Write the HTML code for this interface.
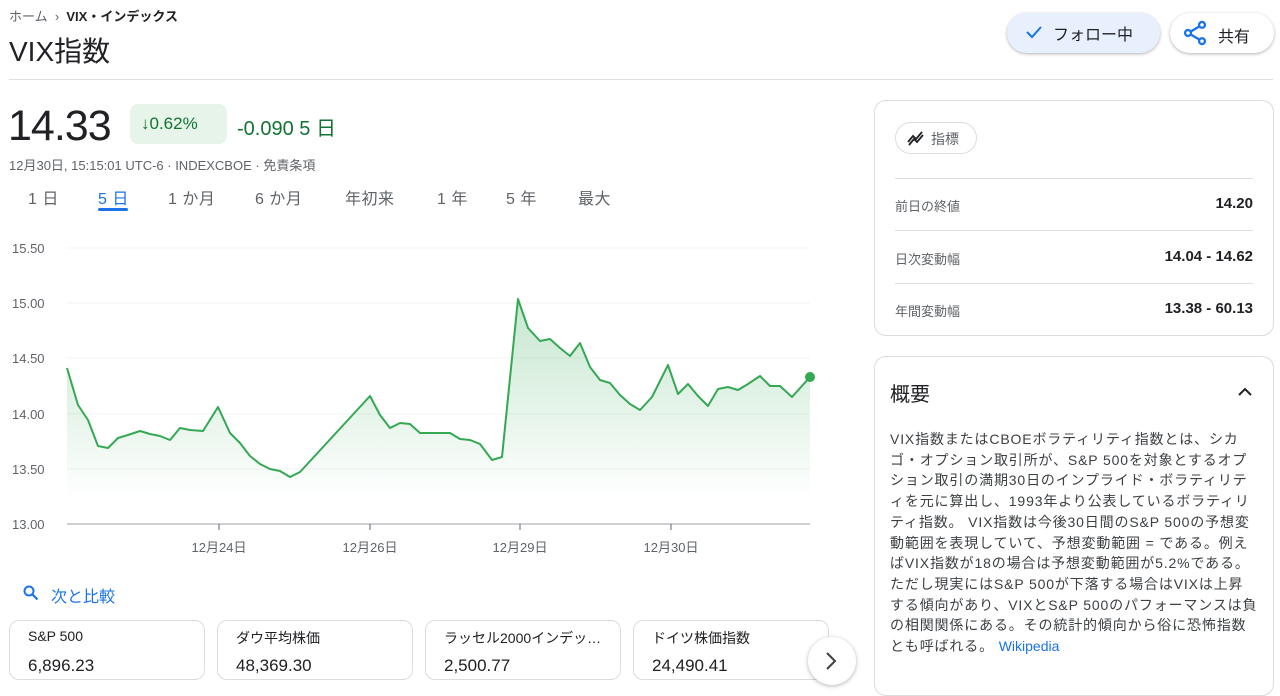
<!DOCTYPE html>
<html><head><meta charset="utf-8"><style>
*{margin:0;padding:0;box-sizing:border-box}
body{width:1280px;height:670px;overflow:hidden;background:#fff;font-family:"Liberation Sans","Noto Sans CJK JP",sans-serif;color:#202124;position:relative}
.a{position:absolute;white-space:nowrap}
.tab{position:absolute;top:185px;font-size:16px;color:#5f6368;letter-spacing:.5px}
.card{position:absolute;border:1px solid #dadce0;border-radius:12px}
.row{position:absolute;left:20px;right:20px;height:1px;background:#dadce0}
.lbl{position:absolute;left:20px;font-size:13px;color:#5f6368}
.val{position:absolute;right:20px;font-size:15px;color:#202124;font-weight:bold}
.cc{position:absolute;top:620px;width:196px;height:60px;border:1px solid #dadce0;border-radius:10px}
.cc .n{position:absolute;left:18px;top:7px;font-size:14px;color:#202124}
.cc .p{position:absolute;left:18px;top:35px;font-size:17px;color:#202124}
</style></head><body>
<div class="a" style="left:9px;top:6px;font-size:13px;color:#5f6368">ホーム&nbsp;&nbsp;›&nbsp;&nbsp;<span style="color:#202124;font-weight:bold">VIX・インデックス</span></div>
<div class="a" style="left:9px;top:30px;font-size:28px;color:#202124">VIX指数</div>
<div class="a" style="left:1007px;top:13px;width:153px;height:40px;border-radius:20px;background:#e8f0fe;box-shadow:0 1px 3px rgba(0,0,0,.3)">
<svg style="position:absolute;left:18px;top:11px" width="18" height="16" viewBox="0 0 18 16"><path d="M2 8l5 5 9-10" stroke="#1a73e8" stroke-width="2" fill="none"/></svg>
<span class="a" style="left:46px;top:8px;font-size:16px;color:#202124">フォロー中</span></div>
<div class="a" style="left:1170px;top:13px;width:104px;height:40px;border-radius:20px;background:#fff;box-shadow:0 1px 3px rgba(0,0,0,.3)">
<svg style="position:absolute;left:11px;top:6px" width="28" height="28" viewBox="0 0 24 24"><g stroke="#1a73e8" stroke-width="2" fill="none"><circle cx="18" cy="5" r="2.5"/><circle cx="6" cy="12" r="2.5"/><circle cx="18" cy="19" r="2.5"/><path d="M8.2 10.8l7.6-4.5M8.2 13.2l7.6 4.5"/></g></svg>
<span class="a" style="left:48px;top:10px;font-size:16px;color:#202124">共有</span></div>
<div class="a" style="left:9px;top:79px;width:1264px;height:1px;background:#e0e0e0"></div>

<div class="a" style="left:8px;top:102px;font-size:43px;color:#202124;letter-spacing:-1px">14.33</div>
<div class="a" style="left:130px;top:104px;width:97px;height:40px;border-radius:8px;background:#e6f4ea;color:#137333;font-size:17px;padding:10px 0 0 11px">↓0.62%</div>
<div class="a" style="left:237px;top:112px;font-size:20px;color:#137333">-0.090 5 日</div>
<div class="a" style="left:9px;top:155px;font-size:13px;color:#5f6368">12月30日, 15:15:01 UTC-6 · INDEXCBOE · 免責条項</div>
<div class="tab" style="left:28px">1 日</div>
<div class="tab" style="left:98px;color:#1a73e8">5 日</div>
<div class="a" style="left:98px;top:208px;width:30px;height:3px;background:#1a73e8;border-radius:2px"></div>
<div class="tab" style="left:168px">1 か月</div>
<div class="tab" style="left:255px">6 か月</div>
<div class="tab" style="left:345px">年初来</div>
<div class="tab" style="left:437px">1 年</div>
<div class="tab" style="left:506px">5 年</div>
<div class="tab" style="left:578px">最大</div>

<svg class="a" style="left:0;top:230px" width="830" height="330" viewBox="0 230 830 330">
<defs><linearGradient id="g" x1="0" y1="0" x2="0" y2="1"><stop offset="0" stop-color="#34a853" stop-opacity=".28"/><stop offset="1" stop-color="#34a853" stop-opacity="0"/></linearGradient></defs>
<g stroke="#f1f3f4" stroke-width="1"><line x1="67" x2="810" y1="248" y2="248"/><line x1="67" x2="810" y1="303" y2="303"/><line x1="67" x2="810" y1="358" y2="358"/><line x1="67" x2="810" y1="414" y2="414"/><line x1="67" x2="810" y1="469" y2="469"/></g>
<g font-size="13" fill="#5f6368" font-family="Liberation Sans,sans-serif"><text x="12" y="253">15.50</text><text x="12" y="308">15.00</text><text x="12" y="363">14.50</text><text x="12" y="419">14.00</text><text x="12" y="474">13.50</text><text x="12" y="529">13.00</text></g>
<path d="M67,368 78,405 88,420 98,446 108,448 118,438 128,435 140,431 150,434 160,436 170,440 180,428 190,430 203,431 218,407 230,433 240,443 250,456 260,464 270,469 280,471 290,477 300,472 370,396 380,415 390,428 400,423 410,424 420,433 440,433 450,433 460,439 470,440 480,444 492,460 502,457 518,299 528,328 540,341 550,339 560,348 570,356 580,343 590,367 600,380 610,383 620,395 630,404 640,410 652,397 668,365 678,394 688,384 698,396 708,406 718,389 728,387 738,390 748,384 760,376 770,386 780,386 792,397 810,377 L810,500 L67,500Z" fill="url(#g)"/>
<polyline points="67,368 78,405 88,420 98,446 108,448 118,438 128,435 140,431 150,434 160,436 170,440 180,428 190,430 203,431 218,407 230,433 240,443 250,456 260,464 270,469 280,471 290,477 300,472 370,396 380,415 390,428 400,423 410,424 420,433 440,433 450,433 460,439 470,440 480,444 492,460 502,457 518,299 528,328 540,341 550,339 560,348 570,356 580,343 590,367 600,380 610,383 620,395 630,404 640,410 652,397 668,365 678,394 688,384 698,396 708,406 718,389 728,387 738,390 748,384 760,376 770,386 780,386 792,397 810,377" fill="none" stroke="#34a853" stroke-width="2" stroke-linejoin="round"/>
<circle cx="810" cy="377" r="5" fill="#34a853"/>
<line x1="67" x2="810" y1="524" y2="524" stroke="#9aa0a6"/>
<g stroke="#5f6368"><line x1="219" x2="219" y1="524" y2="530"/><line x1="370" x2="370" y1="524" y2="530"/><line x1="520" x2="520" y1="524" y2="530"/><line x1="671" x2="671" y1="524" y2="530"/></g>
<g font-size="13" fill="#5f6368" text-anchor="middle" font-family="Liberation Sans,Noto Sans CJK JP,sans-serif"><text x="219" y="552">12月24日</text><text x="370" y="552">12月26日</text><text x="520" y="552">12月29日</text><text x="671" y="552">12月30日</text></g>
</svg>

<svg class="a" style="left:22px;top:584px" width="18" height="18" viewBox="0 0 18 18"><circle cx="7" cy="7" r="4.5" stroke="#1a73e8" stroke-width="2" fill="none"/><path d="M10.5 10.5l5 5" stroke="#1a73e8" stroke-width="2.2"/></svg>
<div class="a" style="left:51px;top:583px;font-size:16px;color:#1a73e8">次と比較</div>
<div class="cc" style="left:9px"><div class="n">S&amp;P 500</div><div class="p">6,896.23</div></div>
<div class="cc" style="left:217px"><div class="n">ダウ平均株価</div><div class="p">48,369.30</div></div>
<div class="cc" style="left:425px"><div class="n">ラッセル2000インデッ…</div><div class="p">2,500.77</div></div>
<div class="cc" style="left:633px"><div class="n">ドイツ株価指数</div><div class="p">24,490.41</div></div>
<div class="a" style="left:808px;top:637px;width:48px;height:48px;border-radius:50%;background:#fff;box-shadow:0 1px 4px rgba(0,0,0,.3)"><svg style="position:absolute;left:16px;top:12px" width="14" height="24" viewBox="0 0 14 24"><path d="M3 4l8 8-8 8" stroke="#3c4043" stroke-width="2" fill="none"/></svg></div>

<div class="card" style="left:874px;top:100px;width:400px;height:236px">
<div class="a" style="left:20px;top:21px;width:82px;height:32px;border:1px solid #dadce0;border-radius:16px">
<svg style="position:absolute;left:11px;top:7px" width="18" height="16" viewBox="0 0 18 16"><path d="M1 12l5-6 3 3 6-7M2 15l5-6 3 3 6-7" stroke="#202124" stroke-width="1.8" fill="none"/></svg>
<span class="a" style="left:35px;top:6px;font-size:14px;color:#5f6368">指標</span></div>
<div class="row" style="top:77px"></div>
<div class="lbl" style="top:95px">前日の終値</div><div class="val" style="top:94px">14.20</div>
<div class="row" style="top:129px"></div>
<div class="lbl" style="top:148px">日次変動幅</div><div class="val" style="top:147px">14.04 - 14.62</div>
<div class="row" style="top:182px"></div>
<div class="lbl" style="top:200px">年間変動幅</div><div class="val" style="top:199px">13.38 - 60.13</div>
</div>

<div class="card" style="left:874px;top:356px;width:400px;height:340px">
<div class="a" style="left:15px;top:21px;font-size:20px;color:#202124">概要</div>
<svg class="a" style="left:362px;top:29px" width="16" height="12" viewBox="0 0 16 12"><path d="M2 9l6-6 6 6" stroke="#202124" stroke-width="2" fill="none"/></svg>
<div class="a" style="left:15px;top:72px;font-size:14px;line-height:20.7px;letter-spacing:0.85px;color:#3c4043">VIX指数またはCBOEボラティリティ指数とは、シカ<br>ゴ・オプション取引所が、S&amp;P 500を対象とするオプ<br>ション取引の満期30日のインプライド・ボラティリテ<br>ィを元に算出し、1993年より公表しているボラティリ<br>ティ指数。 VIX指数は今後30日間のS&amp;P 500の予想変<br>動範囲を表現していて、予想変動範囲 = である。例え<br>ばVIX指数が18の場合は予想変動範囲が5.2%である。<br>ただし現実にはS&amp;P 500が下落する場合はVIXは上昇<br>する傾向があり、VIXとS&amp;P 500のパフォーマンスは負<br>の相関関係にある。その統計的傾向から俗に恐怖指数<br>とも呼ばれる。 <span style="color:#1a73e8;letter-spacing:0">Wikipedia</span></div>
</div>
</body></html>
